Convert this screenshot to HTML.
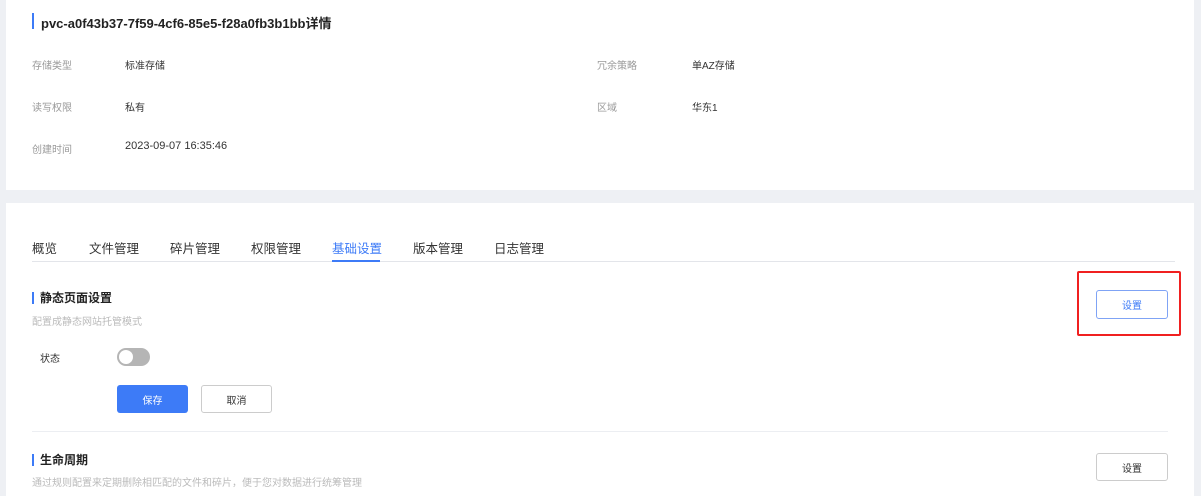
<!DOCTYPE html>
<html><head><meta charset="utf-8"><style>
body{margin:0;width:1201px;height:496px;background:#eef0f4;font-family:"Liberation Sans","Noto Sans CJK SC",sans-serif;position:relative;overflow:hidden}
.a{position:absolute;white-space:nowrap}
.card{position:absolute;background:#fff}
.lbl{font-size:10px;color:#999}
.val{font-size:10px;color:#333}
.tab{font-size:12.5px;color:#333;top:238px}
.btn{position:absolute;box-sizing:border-box;border-radius:3px;font-size:10px;display:flex;align-items:center;justify-content:center}
</style></head><body>
<div class="card" style="left:6px;top:0;width:1188px;height:190px"></div>
<div class="card" style="left:6px;top:203px;width:1188px;height:293px"></div>
<div class="a" style="left:32px;top:13px;width:2px;height:16px;background:#3d7bf7"></div>
<div class="a" style="left:41px;top:13px;font-size:13px;font-weight:bold;color:#222">pvc-a0f43b37-7f59-4cf6-85e5-f28a0fb3b1bb详情</div>
<div class="a lbl" style="left:32px;top:57px">存储类型</div><div class="a val" style="left:125px;top:57px">标准存储</div>
<div class="a lbl" style="left:32px;top:99px">读写权限</div><div class="a val" style="left:125px;top:99px">私有</div>
<div class="a lbl" style="left:32px;top:141px">创建时间</div><div class="a val" style="left:125px;top:140px;font-size:11px">2023-09-07 16:35:46</div>
<div class="a lbl" style="left:597px;top:57px">冗余策略</div><div class="a val" style="left:692px;top:57px">单AZ存储</div>
<div class="a lbl" style="left:597px;top:99px">区域</div><div class="a val" style="left:692px;top:99px">华东1</div>
<div class="a tab" style="left:32px">概览</div>
<div class="a tab" style="left:89px">文件管理</div>
<div class="a tab" style="left:170px">碎片管理</div>
<div class="a tab" style="left:251px">权限管理</div>
<div class="a tab" style="left:332px;color:#3d7bf7">基础设置</div>
<div class="a tab" style="left:413px">版本管理</div>
<div class="a tab" style="left:494px">日志管理</div>
<div class="a" style="left:32px;top:261px;width:1143px;height:1px;background:#e3e5ea"></div>
<div class="a" style="left:332px;top:260px;width:48px;height:2px;background:#3d7bf7"></div>
<div class="a" style="left:32px;top:292px;width:2px;height:12px;background:#3d7bf7"></div>
<div class="a" style="left:40px;top:289px;font-size:12px;font-weight:bold;color:#222">静态页面设置</div>
<div class="a" style="left:32px;top:313px;font-size:10px;color:#bbb">配置成静态网站托管模式</div>
<div class="a val" style="left:40px;top:350px">状态</div>
<div class="a" style="left:117px;top:348px;width:33px;height:18px;border-radius:9px;background:#b5b5b5"></div>
<div class="a" style="left:119px;top:350px;width:14px;height:14px;border-radius:50%;background:#fff"></div>
<div class="btn" style="left:117px;top:385px;width:71px;height:28px;background:#3d7bf7;color:#fff">保存</div>
<div class="btn" style="left:201px;top:385px;width:71px;height:28px;border:1px solid #ccc;color:#333">取消</div>
<div class="a" style="left:32px;top:431px;width:1136px;height:1px;background:#eceef2"></div>
<div class="a" style="left:32px;top:454px;width:2px;height:12px;background:#3d7bf7"></div>
<div class="a" style="left:40px;top:451px;font-size:12px;font-weight:bold;color:#222">生命周期</div>
<div class="a" style="left:32px;top:474px;font-size:10px;color:#bbb">通过规则配置来定期删除相匹配的文件和碎片，便于您对数据进行统筹管理</div>
<div class="btn" style="left:1096px;top:290px;width:72px;height:29px;border:1px solid #7fa3f5;color:#3d7bf7">设置</div>
<div class="a" style="left:1077px;top:271px;width:100px;height:61px;border:2px solid #f02020;border-radius:2px"></div>
<div class="btn" style="left:1096px;top:453px;width:72px;height:28px;border:1px solid #ccc;color:#333">设置</div>
</body></html>
